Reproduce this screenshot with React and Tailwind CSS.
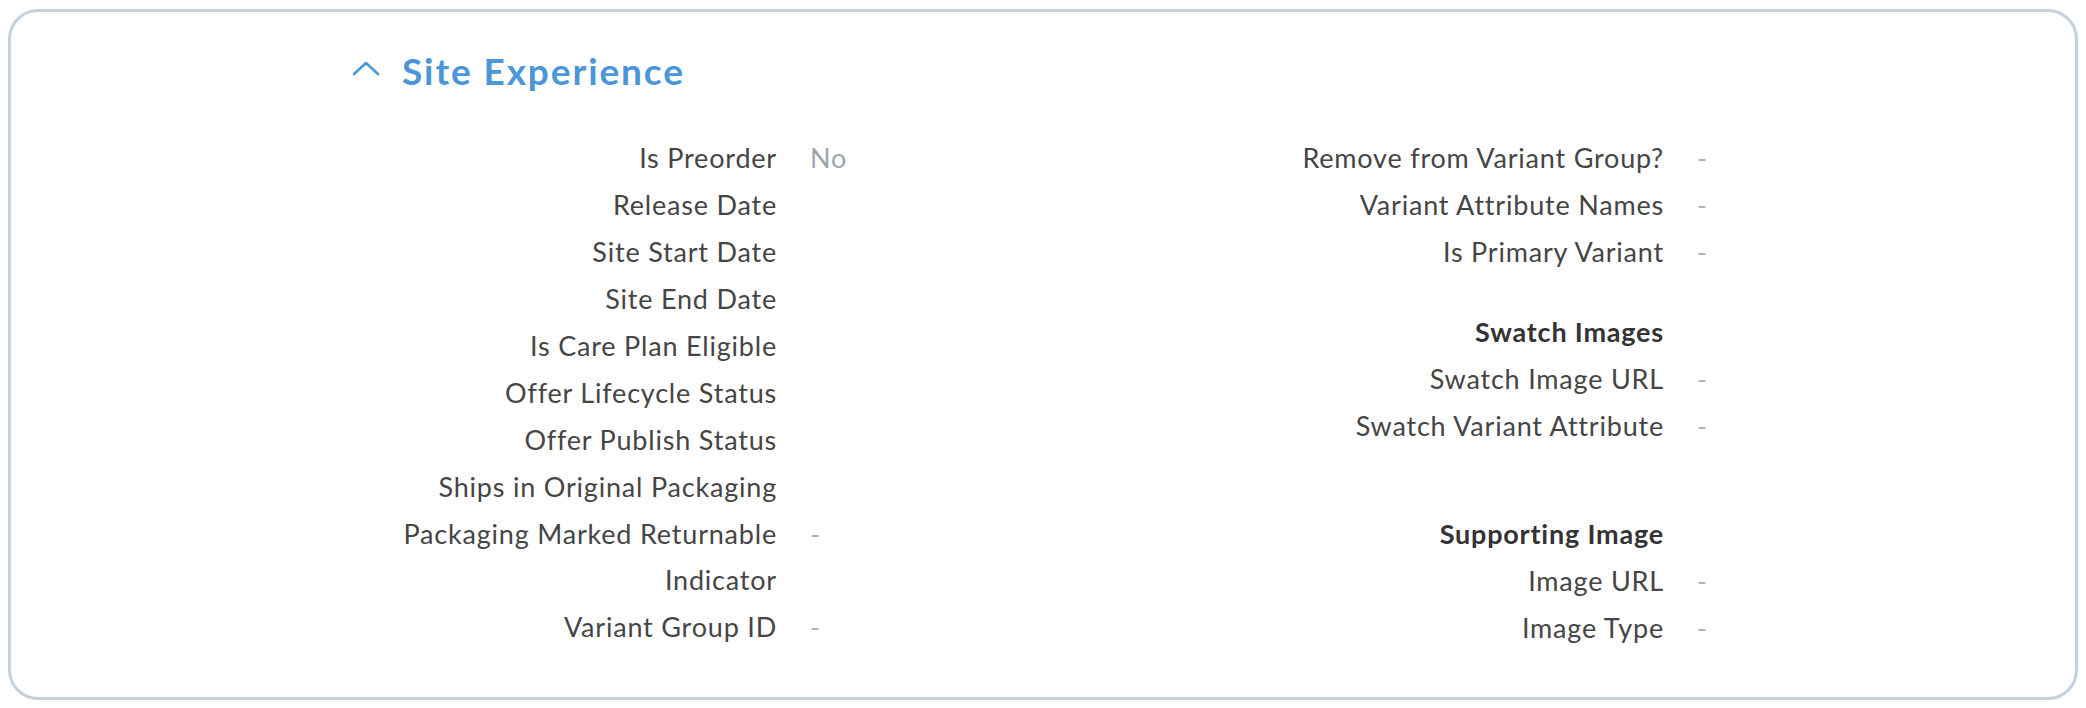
import React from 'react';

const leftRows = [
  { label: 'Is Preorder', value: 'No' },
  { label: 'Release Date' },
  { label: 'Site Start Date' },
  { label: 'Site End Date' },
  { label: 'Is Care Plan Eligible' },
  { label: 'Offer Lifecycle Status' },
  { label: 'Offer Publish Status' },
  { label: 'Ships in Original Packaging' },
  { label: 'Packaging Marked Returnable', value: '-' },
  { label: 'Indicator' },
  { label: 'Variant Group ID', value: '-' },
];

const Row = ({ label, value, bold, labelWidth }) => (
  <div className="flex h-[46.9px] items-center">
    <div
      className={`${labelWidth} text-right whitespace-nowrap ${bold ? 'font-bold text-[#333]' : 'text-[#454545]'}`}
    >
      {label}
    </div>
    <div className={`ml-[33px] ${value === 'No' ? 'text-[#9ba7ae]' : 'text-[#b3b3b3]'}`}>
      {value}
    </div>
  </div>
);

const App = () => {
  return (
    <div
      className="w-[2086px] h-[708px] bg-white pt-[9px] pl-[8px]"
      style={{ fontFamily: 'Lato, "Open Sans", sans-serif' }}
    >
      <div className="w-[2070px] h-[691px] rounded-[30px] border-[3px] border-[#c4d2dd] bg-white">
        {/* header */}
        <div className="flex items-center pl-[341px] pt-[36px]">
          <svg width="28" height="16" viewBox="0 0 28 16" className="mt-[-6px]">
            <path d="M2 14 L14 3 L26 14" fill="none" stroke="#4b96d9" strokeWidth="2.6" strokeLinecap="round" strokeLinejoin="round" />
          </svg>
          <h2 className="ml-[22px] text-[37px] font-bold tracking-[1.9px] text-[#4b96d9] leading-[46px]">Site Experience</h2>
        </div>

        <div className="flex pl-[239px] pt-[41px] text-[27px] tracking-[0.8px] leading-[32px]">
          {/* left column */}
          <div className="w-[825px]">
            {leftRows.map((r) => (
              <Row key={r.label} label={r.label} value={r.value} labelWidth="w-[527px]" />
            ))}
          </div>

          {/* right column */}
          <div>
            <Row label="Remove from Variant Group?" value="-" labelWidth="w-[589px]" />
            <Row label="Variant Attribute Names" value="-" labelWidth="w-[589px]" />
            <Row label="Is Primary Variant" value="-" labelWidth="w-[589px]" />
            <div className="mt-[33px]">
              <Row label="Swatch Images" bold labelWidth="w-[589px]" />
              <Row label="Swatch Image URL" value="-" labelWidth="w-[589px]" />
              <Row label="Swatch Variant Attribute" value="-" labelWidth="w-[589px]" />
            </div>
            <div className="mt-[61px]">
              <Row label="Supporting Image" bold labelWidth="w-[589px]" />
              <Row label="Image URL" value="-" labelWidth="w-[589px]" />
              <Row label="Image Type" value="-" labelWidth="w-[589px]" />
            </div>
          </div>
        </div>
      </div>
    </div>
  );
};

export default App;
